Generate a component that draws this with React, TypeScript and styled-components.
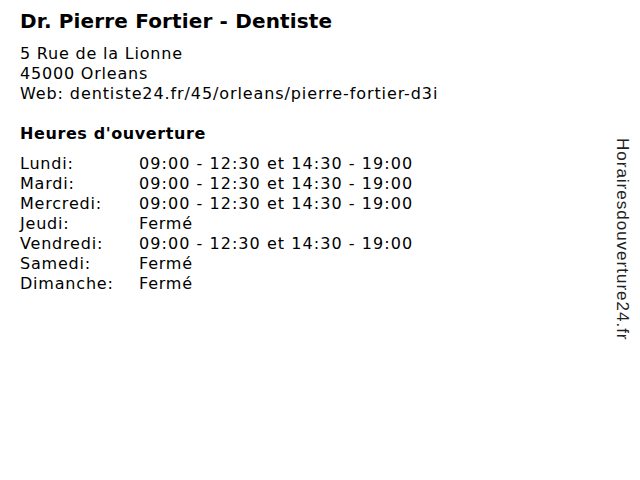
import styled, { createGlobalStyle } from 'styled-components';

const GlobalStyle = createGlobalStyle`
  html, body {
    margin: 0;
    padding: 0;
    background: #ffffff;
  }
  body {
    font-family: 'DejaVu Sans', Verdana, sans-serif;
    color: #000000;
  }
`;

const Page = styled.div`
  width: 640px;
  height: 480px;
  display: flex;
  justify-content: space-between;
  box-sizing: border-box;
  padding: 8px 0 0 20px;
`;

const Main = styled.div`
  display: flex;
  flex-direction: column;
`;

const Title = styled.h1`
  margin: 0;
  font-size: 20px;
  font-weight: bold;
  line-height: 26px;
  letter-spacing: 0.15px;
`;

const Address = styled.div`
  margin-top: 10px;
  font-size: 16px;
  line-height: 20px;
  letter-spacing: 0.8px;
`;

const WebLine = styled.span`
  letter-spacing: 0.9px;
`;

const SectionTitle = styled.h2`
  margin: 20px 0 0;
  font-size: 16px;
  font-weight: bold;
  line-height: 20px;
  letter-spacing: 0.6px;
`;

const Hours = styled.div`
  margin-top: 10px;
  display: grid;
  grid-template-columns: 119px auto;
  font-size: 16px;
  line-height: 20px;
`;

const Day = styled.span`
  letter-spacing: 0.8px;
  white-space: nowrap;
`;

const Time = styled.span<{ $closed?: boolean }>`
  white-space: nowrap;
  letter-spacing: ${(p) => (p.$closed ? '0.8px' : '1.05px')};
`;

const Brand = styled.div`
  flex-shrink: 0;
  white-space: nowrap;
  writing-mode: vertical-rl;
  font-family: 'Liberation Sans', Arial, sans-serif;
  font-size: 17px;
  letter-spacing: 1px;
  color: #222222;
  margin: 130px 8px 0 0;
  line-height: 20px;
  align-self: flex-start;
`;

const schedule: [string, string][] = [
  ['Lundi:', '09:00 - 12:30 et 14:30 - 19:00'],
  ['Mardi:', '09:00 - 12:30 et 14:30 - 19:00'],
  ['Mercredi:', '09:00 - 12:30 et 14:30 - 19:00'],
  ['Jeudi:', 'Fermé'],
  ['Vendredi:', '09:00 - 12:30 et 14:30 - 19:00'],
  ['Samedi:', 'Fermé'],
  ['Dimanche:', 'Fermé'],
];

export default function App() {
  return (
    <>
      <GlobalStyle />
      <Page>
        <Main>
          <Title>Dr. Pierre Fortier - Dentiste</Title>
          <Address>
            5 Rue de la Lionne
            <br />
            45000 Orleans
            <br />
            <WebLine>Web: dentiste24.fr/45/orleans/pierre-fortier-d3i</WebLine>
          </Address>
          <SectionTitle>Heures d'ouverture</SectionTitle>
          <Hours>
            {schedule.map(([day, time]) => [
              <Day key={day}>{day}</Day>,
              <Time key={day + '-t'} $closed={time === 'Fermé'}>
                {time}
              </Time>,
            ])}
          </Hours>
        </Main>
        <Brand>Horairesdouverture24.fr</Brand>
      </Page>
    </>
  );
}
